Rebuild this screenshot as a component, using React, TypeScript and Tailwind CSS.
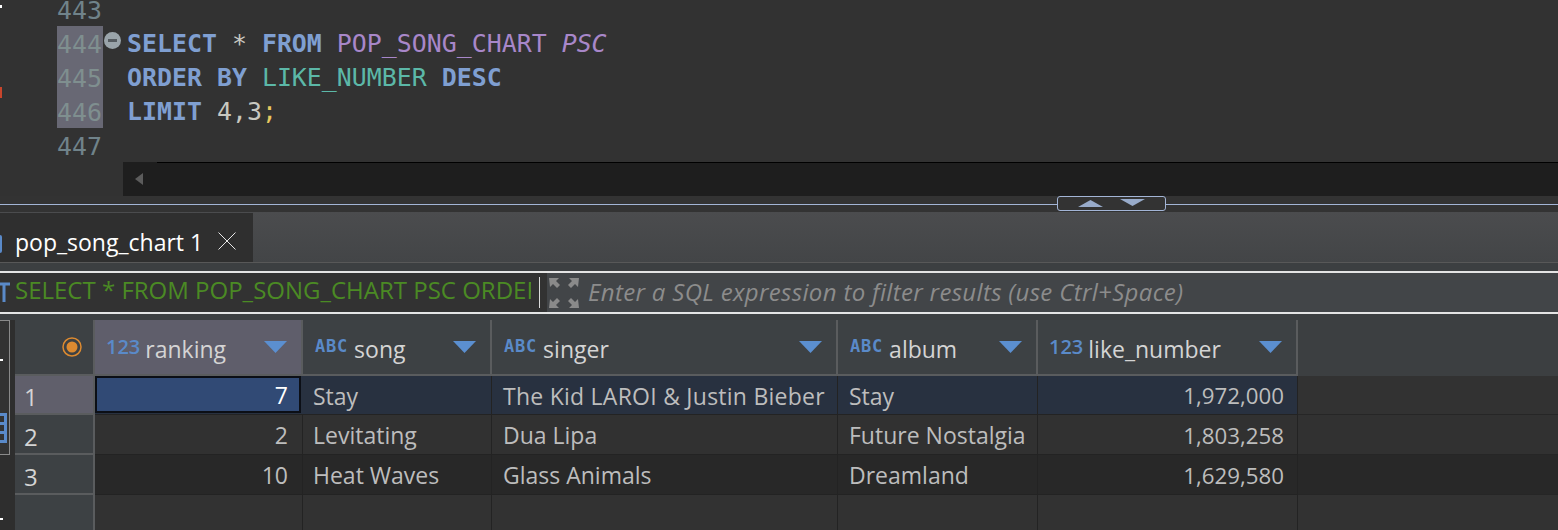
import React from "react";

const gridCols = "grid grid-cols-[80px_208px_189px_346px_200px_260px_1fr]";

const kw = "font-bold text-[#7f9fd1]";

const TypeIcon: React.FC<{ type: "123" | "ABC" }> = ({ type }) =>
  type === "123" ? (
    <span className="mr-[5px] -mt-[1px] font-['Open_Sans',sans-serif] text-[20px] font-semibold leading-none text-[#5a8ac9]">
      123
    </span>
  ) : (
    <span className="mr-[6px] -mt-[1px] ml-[1px] font-['DejaVu_Sans_Mono',monospace] text-[17px] font-bold leading-none tracking-[0.8px] text-[#5a8ac9]">
      ABC
    </span>
  );

const HeaderCell: React.FC<{
  type: "123" | "ABC";
  label: string;
  active?: boolean;
}> = ({ type, label, active }) => (
  <div
    className={`flex items-center border-r-2 border-b-2 border-[#5a5c5e] pl-[11px] pr-[14px] ${
      active ? "bg-[#5f5e6b]" : "bg-[#3d4144]"
    }`}
  >
    <TypeIcon type={type} />
    <span className="flex-1 truncate pt-[4px] leading-[30px] text-[#d4d4d4]">{label}</span>
    <svg width="23" height="12" viewBox="0 0 23 12" className="-mt-[1px]">
      <path d="M0 0h23L11.5 12z" fill="#5b8fd0" />
    </svg>
  </div>
);

const Row: React.FC<{
  n: number;
  rank: number;
  song: string;
  singer: React.ReactNode;
  album: string;
  likes: string;
  bg: string;
  selected?: boolean;
  h: string;
}> = ({ n, rank, song, singer, album, likes, bg, selected, h }) => {
  const cell = `flex items-center whitespace-nowrap border-r border-b border-[#232323] pt-[2px] text-[#bdbdbd] ${bg}`;
  return (
    <div className={`${gridCols} ${h}`}>
      <div
        className={`flex items-center border-r-2 border-b-2 border-[#5a5c5e] pl-[9px] pt-[5px] text-[24px] leading-[24px] text-[#d4d4d4] ${
          selected ? "bg-[#605f6b]" : "bg-[#3d4144]"
        }`}
      >
        {n}
      </div>
      {selected ? (
        <div className={`border-b border-[#232323] pr-[2px] ${bg}`}>
          <div className="flex h-[37px] items-center justify-end border-2 border-[#0c0f16] bg-[#314a75] pr-[11px] pt-[2px] text-white">
            {rank}
          </div>
        </div>
      ) : (
        <div className={`${cell} justify-end pr-[14px]`}>{rank}</div>
      )}
      <div className={`${cell} pl-[10px]`}>{song}</div>
      <div className={`${cell} pl-[11px]`}>{singer}</div>
      <div className={`${cell} pl-[11px]`}>{album}</div>
      <div className={`${cell} justify-end pr-[13px] text-[22.3px]`}>{likes}</div>
      <div className={`border-b border-[#262626] ${selected ? "bg-[#323232]" : bg}`} />
    </div>
  );
};

function App() {
  return (
    <div className="flex h-[530px] w-full flex-col overflow-hidden bg-[#3c3f41] font-['Open_Sans',sans-serif] text-[23px]">
      {/* editor */}
      <div className="relative h-[196px] shrink-0 overflow-hidden bg-[#323232] font-['DejaVu_Sans_Mono',monospace] text-[24.9px] leading-[34px]">
        <div className="absolute left-0 top-[5px] h-[3px] w-[2px] bg-white" />
        <div className="absolute left-0 top-[87px] h-[11px] w-[2px] bg-[#c8452c]" />
        <div className="-mt-[8px] ml-[57px] flex">
          <div className="w-[46px] text-[#70838a]">
            <div className="h-[34px] pt-[2px]">443</div>
            <div className="bg-[#686874] text-[#7f8f8f]">
              <div className="h-[34px] pt-[2px]">444</div>
              <div className="h-[34px] pt-[2px]">445</div>
              <div className="h-[34px] pt-[2px]">446</div>
            </div>
            <div className="h-[34px] pt-[2px]">447</div>
          </div>
          <div className="relative pl-[24px]">
            <div className="h-[34px]" />
            <div className="absolute left-[1px] top-[40px] flex h-[17px] w-[17px] items-center justify-center rounded-full bg-[#9aa4aa]">
              <div className="h-[3px] w-[9px] bg-[#555b60]" />
            </div>
            <div className="h-[34px] whitespace-pre pt-[1px]">
              <span className={kw}>SELECT</span>
              <span className="text-[#c8c8c0]"> * </span>
              <span className={kw}>FROM</span>{" "}
              <span className="text-[#a887c9]">POP_SONG_CHART</span>{" "}
              <span className="italic text-[#a887c9]">PSC</span>
            </div>
            <div className="h-[34px] whitespace-pre pt-[1px]">
              <span className={kw}>ORDER BY</span>{" "}
              <span className="text-[#5cb8a8]">LIKE_NUMBER</span>{" "}
              <span className={kw}>DESC</span>
            </div>
            <div className="h-[34px] whitespace-pre pt-[1px]">
              <span className={kw}>LIMIT</span>
              <span className="text-[#c8c8c0]"> 4,3</span>
              <span className="text-[#e8c860]">;</span>
            </div>
          </div>
        </div>
        {/* horizontal scrollbar */}
        <div className="ml-[123px] flex h-[34px] items-center bg-[#1e1e1e]">
          <div className="absolute bottom-[33px] left-[157px] right-0 h-px bg-black" />
          <svg width="10" height="12" viewBox="0 0 10 12" className="ml-[11px]">
            <path d="M9 0v12L1 6z" fill="#5c5c5c" />
          </svg>
        </div>
      </div>

      {/* sash */}
      <div className="relative flex h-[16px] shrink-0 items-start bg-[#333333]">
        <div className="mt-[8px] h-px w-full bg-[#a3b5d6]" />
        <div className="absolute left-[1057px] top-0 flex h-[15px] w-[109px] items-center justify-center gap-[17px] rounded-[3px] border border-[#a3b5d6] bg-[#333333]">
          <svg width="25" height="7" viewBox="0 0 25 7">
            <path d="M0 7L12.5 0 25 7z" fill="#98abca" />
          </svg>
          <svg width="25" height="7" viewBox="0 0 25 7" className="-mt-[2px]">
            <path d="M0 0h25L12.5 7z" fill="#98abca" />
          </svg>
        </div>
      </div>

      {/* tabs */}
      <div className="flex h-[51px] shrink-0 items-end border-b border-[#585858] bg-gradient-to-b from-[#4b4c4e] to-[#434547]">
        <div className="relative flex h-[49px] w-[253px] items-center bg-[#2f2f2f] pl-[15px] pr-[17px] pt-[8px] leading-[30px] text-white">
          <div className="absolute left-0 top-[22px] h-[18px] w-[2px] rounded-r bg-[#5a8ac9]" />
          <span className="flex-1">pop_song_chart 1</span>
          <svg width="18" height="18" viewBox="0 0 18 18" className="-mt-[2px]">
            <path d="M0.5 0.5l17 17M17.5 0.5l-17 17" stroke="#e8e8e8" strokeWidth="1" fill="none" />
          </svg>
        </div>
      </div>

      {/* filter bar */}
      <div className="mt-[8px] flex h-[43px] shrink-0 items-stretch border-y-2 border-[#e4e4e4] bg-[#323232]">
        <div className="flex w-[15px] items-center pb-[2px]">
          <svg width="10" height="20" viewBox="0 0 10 20">
            <path d="M0 2h10M4 2v18" stroke="#5a8ac9" strokeWidth="3" fill="none" />
          </svg>
        </div>
        <div className="w-[516px] overflow-hidden whitespace-nowrap text-[24px] leading-[33px] text-[#4b8a24]">
          SELECT * FROM POP_SONG_CHART PSC ORDER BY LIKE_NUMBER DESC
        </div>
        <div className="ml-[8px] mt-[4px] h-[31px] w-px bg-[#dcdcdc]" />
        <div className="ml-[7px] flex flex-1 items-center bg-[#424548]">
          <svg width="32" height="30" viewBox="0 0 30 30" className="ml-[1px]">
            <path
              d="M0 0h10l-3 3 4 4-3 3-4-4-3 3zM30 0h-10l3 3-4 4 3 3 4-4 3 3zM0 30h10l-3-3 4-4-3-3-4 4-3-3zM30 30h-10l3-3-4-4 3-3 4 4 3-3z"
              fill="#8a8a8a"
            />
          </svg>
          <div className="ml-[8px] pb-[2px] text-[24px] italic tracking-[0.33px] text-[#8c8c8c]">
            Enter a SQL expression to filter results (use Ctrl+Space)
          </div>
        </div>
      </div>

      {/* results grid */}
      <div className="mt-[6px] flex min-h-0 flex-1">
        <div className="relative w-[15px] shrink-0 bg-[#2e2e2e]">
          <div className="relative h-[135px] w-[10px] border-t border-r border-b border-[#8a8a8a] bg-[#333333]">
            <div className="absolute left-0 top-[38px] h-[2px] w-[3px] bg-white" />
            <svg width="7" height="30" viewBox="0 0 7 30" className="absolute left-0 top-[92px]">
              <path d="M0 1.5h5.5v27H0M0 10.5h5.5M0 19.5h5.5" stroke="#5a8ac9" strokeWidth="3" fill="none" />
            </svg>
          </div>
          <div className="absolute left-0 top-[198px] h-[2px] w-[3px] bg-white" />
        </div>
        <div className="min-w-0 flex-1">
          <div className={`${gridCols} h-[56px]`}>
            <div className="flex items-center justify-end border-r-2 border-b-2 border-[#5a5c5e] bg-[#3d4144] pr-[11px]">
              <svg width="20" height="20" viewBox="0 0 20 20">
                <circle cx="10" cy="10" r="9" fill="none" stroke="#dd8a30" strokeWidth="1.5" />
                <circle cx="10" cy="10" r="5.5" fill="#dd8a30" />
              </svg>
            </div>
            <HeaderCell type="123" label="ranking" active />
            <HeaderCell type="ABC" label="song" />
            <HeaderCell type="ABC" label="singer" />
            <HeaderCell type="ABC" label="album" />
            <HeaderCell type="123" label="like_number" />
            <div className="bg-[#3c3f41]" />
          </div>
          <Row
            n={1}
            rank={7}
            song="Stay"
            singer={<span className="tracking-[0.25px]">The Kid LAROI &amp; Justin Bieber</span>}
            album="Stay"
            likes="1,972,000"
            bg="bg-[#283140]"
            selected
            h="h-[39px]"
          />
          <Row n={2} rank={2} song="Levitating" singer="Dua Lipa" album="Future Nostalgia" likes="1,803,258" bg="bg-[#313131]" h="h-[40px]" />
          <Row n={3} rank={10} song="Heat Waves" singer="Glass Animals" album="Dreamland" likes="1,629,580" bg="bg-[#282828]" h="h-[40px]" />
          <div className={`${gridCols} h-[36px]`}>
            <div className="border-r-2 border-[#5a5c5e] bg-[#3d4144]" />
            <div className="border-r border-[#232323] bg-[#323232]" />
            <div className="border-r border-[#232323] bg-[#323232]" />
            <div className="border-r border-[#232323] bg-[#323232]" />
            <div className="border-r border-[#232323] bg-[#323232]" />
            <div className="border-r border-[#232323] bg-[#323232]" />
            <div className="bg-[#323232]" />
          </div>
        </div>
      </div>
    </div>
  );
}

export default App;
